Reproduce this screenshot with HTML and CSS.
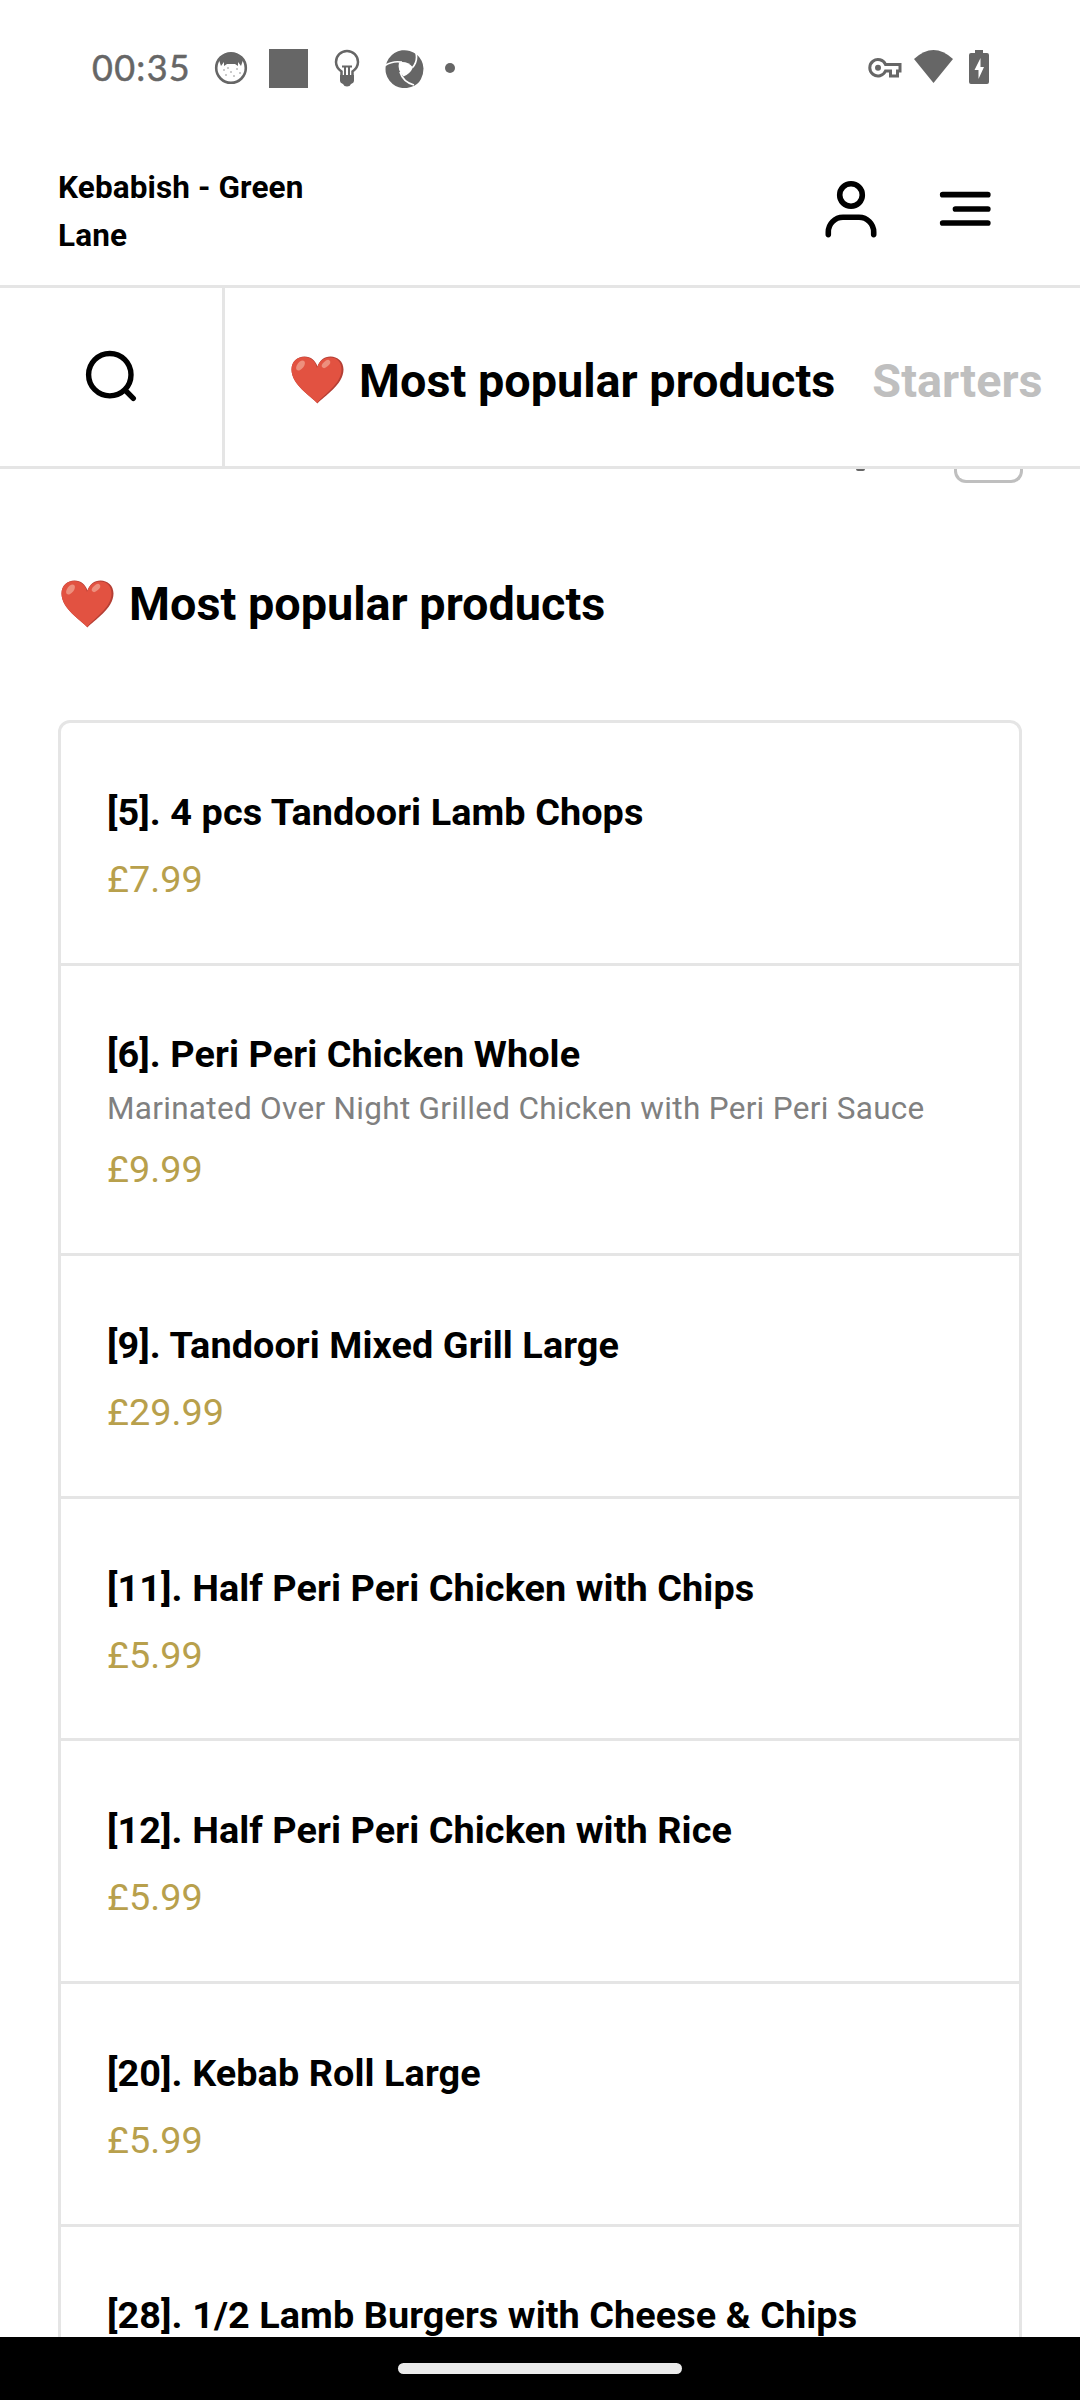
FILE: index.html
```html
<!DOCTYPE html>
<html lang="en">
<head>
    <meta charset="UTF-8">
    <meta name="viewport" content="width=device-width, initial-scale=1.0">
    <title>Kebabish - Green Lane</title>
    <link rel="stylesheet" href="styles.css">
</head>
<body>
    <svg class="defs" width="0" height="0">
        <symbol id="heart" viewBox="0 0 53 48">
            <path d="M26.5 47.5C20 40 0.5 29 0.5 13.5C0.5 5.5 6.5 0.5 13.5 0.5C20 0.5 24.5 4.5 26.5 10.5C28.5 4.5 33 0.5 39.5 0.5C46.5 0.5 52.5 5.5 52.5 13.5C52.5 29 33 40 26.5 47.5Z" fill="#b43f35"/>
            <path d="M26.2 47C20 40 0.5 29 0.5 13.5C0.5 5.5 6.5 1 13 1C20 1 24.5 5 26 12C28 5 33 1.5 39 1.5C46 1.5 50.5 6 50.5 13.5C50.5 28 33 38 26.2 47Z" fill="#e25241"/>
            <ellipse cx="9.5" cy="9.5" rx="3.3" ry="5.8" transform="rotate(38 9.5 9.5)" fill="#ed8f7d"/>
            <ellipse cx="35" cy="8" rx="2.8" ry="5" transform="rotate(48 35 8)" fill="#ed8f7d"/>
        </symbol>
    </svg>
    <div class="status">
        <span class="clock">00:35</span>
        <svg class="face" width="34" height="34" viewBox="0 0 34 34">
            <circle cx="17" cy="17" r="14.8" fill="#fff" stroke="#666" stroke-width="2.6"/>
            <path d="M5 9Q17 -4 29 9L27 15L24 11V15L21 13H13L10 15V11L7 15Z" fill="#666"/>
            <g fill="#888">
                <circle cx="10" cy="19" r="0.8"/><circle cx="14" cy="17" r="0.8"/><circle cx="23" cy="18" r="0.8"/>
                <circle cx="17" cy="21" r="0.8"/><circle cx="12" cy="24" r="0.8"/><circle cx="20" cy="25" r="0.8"/><circle cx="26" cy="22" r="0.8"/>
            </g>
        </svg>
        <span class="square"></span>
        <svg class="bulb" width="26" height="38" viewBox="0 0 26 38">
            <path d="M7.5 26V22.5C4 20 2 17 2 13A11 11 0 0 1 24 13C24 17 22 20 18.5 22.5V26" fill="none" stroke="#666" stroke-width="2.5"/>
            <path d="M6 26H20V32Q20 34 17 35Q16 37.5 13 37.5Q10 37.5 9 35Q6 34 6 32Z" fill="#666"/>
            <path d="M8 17.5H18M11 17.5V27M15 17.5V27" fill="none" stroke="#666" stroke-width="2"/>
        </svg>
        <svg class="wheel" width="39" height="39" viewBox="0 0 39 39">
            <path d="M38.5 19.5A19 19 0 1 0 26 38Q33 36 36 30Q38.5 25 38.5 19.5Z" fill="#666"/>
            <path d="M14 13.5Q22 11.5 28 18.5Q25 25 18.5 27.5Q12 21 14 13.5Z" fill="#fff"/>
            <path d="M0 16.5Q8 11.5 17 13.2M27.5 18.5Q33 12 31 4M15 23Q18 33 29 36" fill="none" stroke="#fff" stroke-width="1.7"/>
        </svg>
        <span class="dot"></span>
        <svg class="key" width="34" height="20" viewBox="0 0 34 20">
            <path d="M17.5 6.5H32V13H29.5V18H22.5V13H17.5A8.2 8.2 0 1 1 17.5 6.5Z" fill="none" stroke="#666" stroke-width="3"/>
            <circle cx="10" cy="9.8" r="3" fill="#666"/>
        </svg>
        <svg class="wifi" width="39" height="33" viewBox="0 0 39 33">
            <path d="M0 9Q19.5 -9 39 9L19.5 33Z" fill="#666"/>
        </svg>
        <svg class="battery" width="20" height="34" viewBox="0 0 20 34">
            <path d="M6 0H14V3H18Q20 3 20 5V32Q20 34 18 34H2Q0 34 0 32V5Q0 3 2 3H6Z" fill="#666"/>
            <path d="M11.5 8L5.5 20H9.5V29L15 17H11.5Z" fill="#fff"/>
        </svg>
    </div>
    <header class="header">
        <h1>Kebabish - Green Lane</h1>
        <svg class="user" width="54" height="58" viewBox="0 0 54 58">
            <g fill="none" stroke="#000" stroke-width="5.6" stroke-linecap="round">
                <circle cx="27" cy="15" r="11.3"/>
                <path d="M4.3 54.6V52A14.7 14.7 0 0 1 19 37.3H35A14.7 14.7 0 0 1 49.7 52V54.6"/>
            </g>
        </svg>
        <svg class="menu" width="54" height="36" viewBox="0 0 54 36">
            <path d="M3.7 3.7H48.8M16.5 18H48.8M3.7 32H48.8" stroke="#000" stroke-width="5.7" stroke-linecap="round"/>
        </svg>
    </header>
    <nav class="nav">
        <div class="search">
            <svg width="52" height="52" viewBox="0 0 52 52">
                <g fill="none" stroke="#000" stroke-width="5.4" stroke-linecap="round">
                    <circle cx="24.8" cy="24.7" r="21.2"/>
                    <path d="M40.5 40.5L48.3 48.3"/>
                </g>
            </svg>
        </div>
        <div class="tabs">
            <svg class="heart"><use href="#heart"/></svg>
            <span class="tab active">Most popular products</span>
            <span class="tab">Starters</span>
        </div>
    </nav>
    <main class="content">
        <div class="filter">
            <span class="mark"></span>
            <span class="box"></span>
        </div>
        <h2><svg class="heart"><use href="#heart"/></svg>Most popular products</h2>
        <div class="list">
            <div class="item">
                <div class="name">[5]. 4 pcs Tandoori Lamb Chops</div>
                <div class="price">£7.99</div>
            </div>
            <div class="item">
                <div class="name">[6]. Peri Peri Chicken Whole</div>
                <div class="desc">Marinated Over Night Grilled Chicken with Peri Peri Sauce</div>
                <div class="price">£9.99</div>
            </div>
            <div class="item">
                <div class="name">[9]. Tandoori Mixed Grill Large</div>
                <div class="price">£29.99</div>
            </div>
            <div class="item">
                <div class="name">[11]. Half Peri Peri Chicken with Chips</div>
                <div class="price">£5.99</div>
            </div>
            <div class="item">
                <div class="name">[12]. Half Peri Peri Chicken with Rice</div>
                <div class="price">£5.99</div>
            </div>
            <div class="item">
                <div class="name">[20]. Kebab Roll Large</div>
                <div class="price">£5.99</div>
            </div>
            <div class="item">
                <div class="name">[28]. 1/2 Lamb Burgers with Cheese &amp; Chips</div>
            </div>
        </div>
    </main>
    <footer class="gesture"><span></span></footer>
</body>
</html>
```
FILE: styles.css
```css
* {
    box-sizing: border-box;
}
body {
    margin: 0;
    height: 2400px;
    overflow: hidden;
    display: flex;
    flex-direction: column;
    background: #fff;
    color: #000;
    font-family: Roboto, sans-serif;
}
svg {
    display: block;
    flex: none;
}
.defs {
    height: 0;
}
.status {
    height: 136px;
    flex: none;
    display: flex;
    align-items: center;
    padding-left: 92px;
}
.clock {
    width: 122px;
    margin-bottom: 2px;
    font-family: Lato, sans-serif;
    font-size: 36px;
    letter-spacing: 1.3px;
    -webkit-text-stroke: 0.5px #666;
    color: #666;
}
.square {
    width: 39px;
    height: 39px;
    margin: 0 26px 0 21px;
    background: #666;
}
.wheel {
    margin: 0 21px 0 25px;
}
.dot {
    width: 10px;
    height: 10px;
    border-radius: 50%;
    background: #666;
}
.key {
    margin-left: 413px;
}
.wifi {
    margin: 0 16px 4px 12px;
}
.battery {
    margin-bottom: 2px;
}
.header {
    height: 152px;
    flex: none;
    display: flex;
    align-items: flex-start;
    border-bottom: 3px solid #e5e5e5;
    padding-left: 58px;
}
h1 {
    width: 300px;
    margin: 28px 466px 0 0;
    font-size: 31.5px;
    line-height: 48px;
    letter-spacing: 0.12px;
    font-weight: 700;
}
.user {
    margin-top: 44px;
}
.menu {
    margin: 55px 0 0 60.5px;
}
.nav {
    height: 181px;
    flex: none;
    display: flex;
    border-bottom: 3px solid #e5e5e5;
}
.search {
    width: 225px;
    padding: 62px 0 0 85px;
    border-right: 3px solid #e5e5e5;
}
.tabs {
    flex: 1;
    display: flex;
    align-items: center;
    padding: 6px 0 0 66px;
    overflow: hidden;
    white-space: nowrap;
}
.heart {
    width: 53px;
    height: 48px;
}
.tab {
    margin: 2px 0 0 37px;
    font-size: 46.8px;
    font-weight: 700;
    color: #bfbfbf;
}
.active {
    margin-left: 15px;
    color: #000;
}
.content {
    flex: 1;
    min-height: 0;
    overflow: hidden;
    padding: 0 58px;
}
.filter {
    height: 14px;
    display: flex;
    justify-content: flex-end;
}
.mark {
    width: 9px;
    height: 2px;
    margin-right: 89px;
    border-radius: 0 0 5px 5px;
    background: #666;
}
.box {
    width: 69px;
    height: 14px;
    margin-right: -1px;
    border: 3px solid #bfbfbf;
    border-top: 0;
    border-radius: 0 0 12px 12px;
}
h2 {
    display: flex;
    align-items: center;
    gap: 15px;
    height: 70px;
    margin: 86px 0 81px;
    padding: 0 0 0 3px;
    font-size: 46.8px;
    font-weight: 700;
}
.list {
    border: 3px solid #e5e5e5;
    border-radius: 12px 12px 0 0;
}
.item {
    padding: 60.8px 46px 54.8px;
    border-bottom: 3px solid #e5e5e5;
}
.name {
    font-size: 37.8px;
    line-height: 57px;
    letter-spacing: 0.08px;
    font-weight: 700;
}
.desc {
    margin: 2px 0 -1px;
    font-size: 31.5px;
    line-height: 47px;
    letter-spacing: 0.3px;
    color: #808080;
}
.price {
    margin-top: 10px;
    font-size: 37.8px;
    line-height: 57px;
    color: #b8a04c;
}
.gesture {
    height: 63px;
    flex: none;
    display: flex;
    align-items: center;
    justify-content: center;
    background: #000;
}
.gesture span {
    width: 284px;
    height: 11px;
    border-radius: 6px;
    background: #ebebeb;
}
```
